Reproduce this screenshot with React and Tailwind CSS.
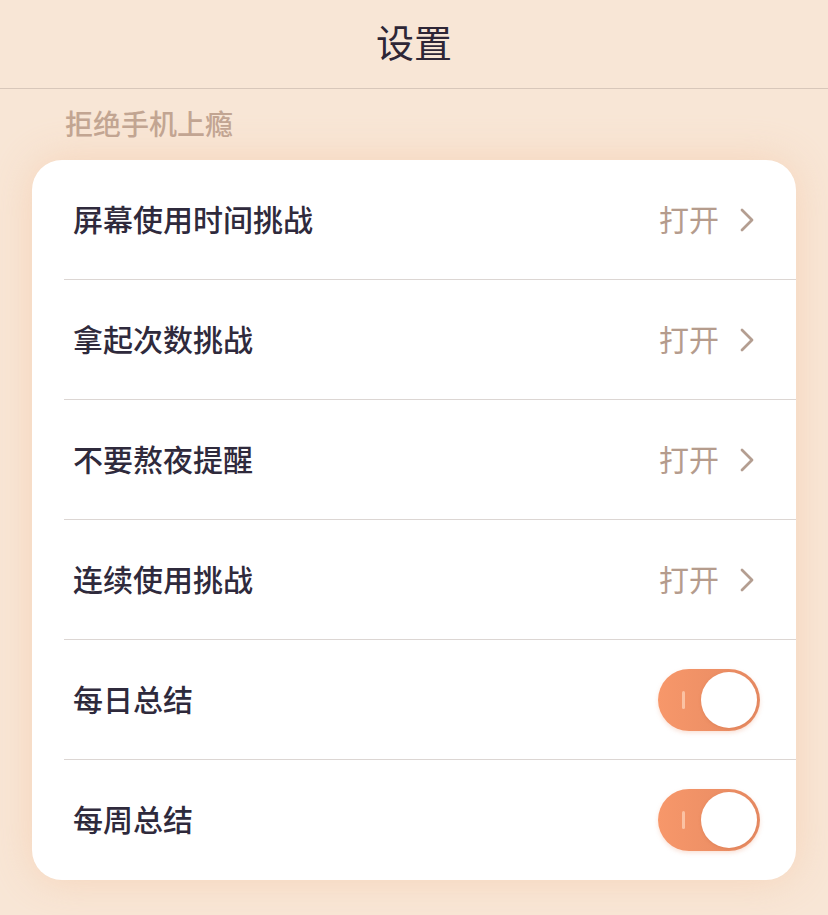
import React from "react";

const font = { fontFamily: '"Noto Sans CJK SC", "Noto Sans", sans-serif' };

function Chevron() {
  return (
    <svg width="16" height="26" viewBox="0 0 16 26" className="ml-[20px]">
      <path d="M3 3 L13 13 L3 23" fill="none" stroke="#b49e91" strokeWidth="2.8" strokeLinecap="round" strokeLinejoin="round" />
    </svg>
  );
}

function Toggle() {
  return (
    <div className="relative w-[102px] h-[62px] rounded-full bg-gradient-to-r from-[#f7976a] to-[#e68a62] shadow-[0_2px_4px_rgba(230,140,100,0.25)]">
      <div className="absolute left-[24px] top-[22px] w-[3px] h-[18px] rounded-sm bg-[#fbc2a3]" />
      <div className="absolute right-[3px] top-[3px] w-[56px] h-[56px] rounded-full bg-white shadow-[0_1px_3px_rgba(200,110,70,0.35)]" />
    </div>
  );
}

const rows = [
  { label: "屏幕使用时间挑战", type: "open" },
  { label: "拿起次数挑战", type: "open" },
  { label: "不要熬夜提醒", type: "open" },
  { label: "连续使用挑战", type: "open" },
  { label: "每日总结", type: "toggle" },
  { label: "每周总结", type: "toggle" },
];

export default function App() {
  return (
    <div style={font} className="w-[828px] h-[915px] overflow-hidden bg-[#f8e6d6]">
      <div className="h-[89px] flex items-center justify-center border-b border-[#d8c7ba]">
        <span className="text-[38px] text-[#2e2636] leading-none mb-[6px]">设置</span>
      </div>
      <div className="h-[71px] flex items-center pl-[65px]">
        <span className="text-[28px] font-medium text-[#c2a592] leading-none mb-[4px]">拒绝手机上瘾</span>
      </div>
      <div className="mx-[32px] rounded-[30px] bg-white overflow-hidden shadow-[0_0_40px_rgba(245,190,150,0.45)]">
        {rows.map((r, i) => (
          <div key={i} className="pl-[32px]">
            <div
              className={
                "h-[120px] flex items-center justify-between pl-[9px] " +
                (i < rows.length - 1 ? "border-b border-[#dcd6d3] " : "") +
                (r.type === "open" ? "pr-[41px]" : "pr-[36px]")
              }
            >
              <span className="text-[30px] font-medium text-[#2f2a3c] leading-none mb-[4px]">{r.label}</span>
              {r.type === "open" ? (
                <div className="flex items-center">
                  <span className="text-[30px] text-[#b59c8d] leading-none mb-[4px]">打开</span>
                  <Chevron />
                </div>
              ) : (
                <Toggle />
              )}
            </div>
          </div>
        ))}
      </div>
    </div>
  );
}
